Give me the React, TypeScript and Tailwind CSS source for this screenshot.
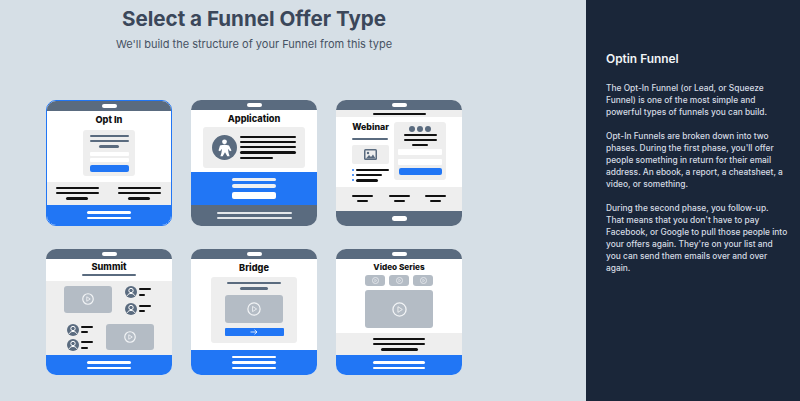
import React from "react";

const Bar = ({ className = "" }: { className?: string }) => <div className={`shrink-0 rounded-full ${className}`} />;

const Play = ({ size, sw = 1.6 }: { size: number; sw?: number }) => (
  <svg width={size} height={size} viewBox="0 0 24 24" fill="none" className="shrink-0">
    <circle cx="12" cy="12" r="10.5" stroke="#f2f4f6" strokeWidth={sw * 1.5} />
    <path d="M9.5 7.5 16.5 12 9.5 16.5Z" stroke="#f2f4f6" strokeWidth={sw} strokeLinejoin="round" />
  </svg>
);

const Person = () => (
  <svg width="12" height="12" viewBox="0 0 24 24" className="shrink-0">
    <circle cx="12" cy="12" r="12" fill="#5a6b7f" />
    <circle cx="12" cy="9" r="4.4" fill="none" stroke="#fff" strokeWidth="2" />
    <path d="M4.5 19.5C6 15.8 9 15 12 15s6 .8 7.5 4.5" fill="none" stroke="#fff" strokeWidth="2" />
  </svg>
);

const PersonRow = () => (
  <div className="flex items-center gap-[2px]">
    <Person />
    <div className="flex flex-col gap-[3.5px]">
      <Bar className="w-[12px] h-[2px] bg-[#111]" />
      <Bar className="w-[6.5px] h-[2px] bg-[#111]" />
    </div>
  </div>
);

const Video = ({ className, play, sw }: { className: string; play: number; sw?: number }) => (
  <div className={`flex items-center justify-center rounded-[3px] bg-[#b4bcc5] ${className}`}>
    <Play size={play} sw={sw} />
  </div>
);

const Head = ({ className = "" }: { className?: string }) => (
  <div className={`shrink-0 flex items-center justify-center bg-[#5a6b7f] ${className}`}>
    <div className="w-[15px] h-[4.5px] rounded-full bg-white" />
  </div>
);

const Title = ({ children, className = "" }: { children: React.ReactNode; className?: string }) => (
  <div className={`font-extrabold text-[#111] leading-[12px] text-center font-['Inter',sans-serif] ${className}`}>{children}</div>
);

const Card = ({ children, className = "" }: { children: React.ReactNode; className?: string }) => (
  <div className={`w-[126px] h-[126px] rounded-[10px] overflow-hidden bg-white flex flex-col ${className}`}>{children}</div>
);

const Foot2 = () => (
  <div className="flex-1 bg-[#2176f5] flex flex-col items-center justify-center gap-[3px]">
    <Bar className="w-[44px] h-[2.2px] bg-white" />
    <Bar className="w-[44px] h-[2.2px] bg-white" />
  </div>
);

const Triple = () => (
  <div className="flex flex-col items-center gap-[3px]">
    <Bar className="w-[43px] h-[2.2px] bg-[#111]" />
    <Bar className="w-[43px] h-[2.2px] bg-[#111]" />
    <Bar className="w-[22px] h-[2.2px] bg-[#111]" />
  </div>
);

const Duo = () => (
  <div className="flex flex-col items-center gap-[3.2px]">
    <Bar className="w-[21px] h-[2px] bg-[#111]" />
    <Bar className="w-[11px] h-[2px] bg-[#111]" />
  </div>
);

const OptIn = () => (
  <Card className="border-[1.5px] border-[#2176f5]">
    <Head className="h-[10px]" />
    <div className="bg-white h-[71px] flex flex-col items-center pt-[3px]">
      <Title className="text-[9.2px]">Opt In</Title>
      <div className="mt-[4px] w-[52px] h-[46px] rounded-[3px] bg-[#eeeeee] flex flex-col items-center pt-[5px]">
        <Bar className="w-[39px] h-[2.2px] bg-[#5a6b7f]" />
        <Bar className="mt-[3px] w-[39px] h-[2.2px] bg-[#5a6b7f]" />
        <Bar className="mt-[3px] w-[20px] h-[2.2px] bg-[#5a6b7f]" />
        <div className="mt-[4px] w-[39px] h-[4px] bg-white rounded-[1px]" />
        <div className="mt-[2px] w-[39px] h-[4px] bg-white rounded-[1px]" />
        <div className="mt-[3.5px] w-[39px] h-[7px] bg-[#2176f5] rounded-[2px]" />
      </div>
    </div>
    <div className="bg-[#eeeeee] h-[23px] flex justify-center gap-[19px] pt-[5px] pr-[2px]">
      <Triple />
      <Triple />
    </div>
    <Foot2 />
  </Card>
);

const Application = () => (
  <Card>
    <Head className="h-[10px]" />
    <div className="h-[62px] flex flex-col items-center pt-[2.5px]">
      <Title className="text-[9.2px]">Application</Title>
      <div className="mt-[2.5px] w-[102px] h-[40.5px] rounded-[3px] bg-[#eeeeee] flex items-center pl-[8.5px] gap-[3.5px]">
        <svg width="25" height="25" viewBox="0 0 25 25" className="shrink-0">
          <circle cx="12.5" cy="12.5" r="12.5" fill="#5a6b7f" />
          <circle cx="12.5" cy="6.8" r="2.4" fill="#fff" />
          <path d="M8 10.5c3-1 6-1 9 0l2.5 5-1.5.8-2-2.6.6 4.3 1 3.2h-2.3l-2.3-4-2.3 4H8.400l1-3.200.6-4.300-2 2.600-1.500-.8Z" fill="#fff" />
        </svg>
        <div className="flex flex-col gap-[3px]">
          <Bar className="w-[56px] h-[2.2px] bg-[#111]" />
          <Bar className="w-[56px] h-[2.2px] bg-[#111]" />
          <Bar className="w-[56px] h-[2.2px] bg-[#111]" />
          <Bar className="w-[56px] h-[2.2px] bg-[#111]" />
          <Bar className="w-[33px] h-[2.2px] bg-[#111]" />
        </div>
      </div>
    </div>
    <div className="h-[33px] bg-[#2176f5] flex flex-col items-center pt-[5.5px]">
      <Bar className="w-[44px] h-[3.5px] bg-[#eef0f3]" />
      <Bar className="mt-[3px] w-[44px] h-[3.5px] bg-[#eef0f3]" />
      <div className="mt-[4.5px] w-[44px] h-[7px] rounded-[2px] bg-white" />
    </div>
    <div className="flex-1 bg-[#5a6b7f] flex flex-col items-center justify-center gap-[3px]">
      <Bar className="w-[75px] h-[2.2px] bg-[#e4e7ea]" />
      <Bar className="w-[75px] h-[2.2px] bg-[#e4e7ea]" />
    </div>
  </Card>
);

const Webinar = () => (
  <Card>
    <Head className="h-[10px]" />
    <div className="h-[7px] bg-[#eeeeee] flex items-center justify-center">
      <Bar className="w-[53px] h-[2px] bg-[#111]" />
    </div>
    <div className="h-[70px] flex justify-center gap-[5px] pt-[5px]">
      <div className="w-[37px] flex flex-col">
        <Title className="text-[8.8px] mt-[-1px] whitespace-nowrap">Webinar</Title>
        <Bar className="mt-[5px] w-[36px] h-[2px] bg-[#5a6b7f]" />
        <div className="mt-[5px] w-[37px] h-[19px] rounded-[2px] bg-[#eeeeee] flex items-center justify-center">
          <svg width="13" height="11" viewBox="0 0 13 11">
            <rect width="13" height="11" rx="1.500" fill="#5a6b7f" />
            <rect x="1.500" y="1.500" width="10" height="8" fill="#eeeeee" />
            <circle cx="4" cy="4" r="1.200" fill="#5a6b7f" />
            <path d="M2 9.500 5 6l2 2 2-2.500 2.500 4Z" fill="#5a6b7f" />
          </svg>
        </div>
        <div className="mt-[5px] flex flex-col gap-[3px]">
          <div className="flex items-center gap-[1.500px]">
            <div className="w-[2px] h-[2px] rounded-full bg-[#2176f5]" />
            <Bar className="w-[33px] h-[2.200px] bg-[#111]" />
          </div>
          <div className="flex items-center gap-[1.500px]">
            <div className="w-[2px] h-[2px] rounded-full bg-[#2176f5]" />
            <Bar className="w-[26px] h-[2.200px] bg-[#111]" />
          </div>
          <div className="flex items-center gap-[1.500px]">
            <div className="w-[2px] h-[2px] rounded-full bg-[#2176f5]" />
            <Bar className="w-[22px] h-[2.200px] bg-[#111]" />
          </div>
        </div>
      </div>
      <div className="w-[52px] h-[57.500px] rounded-[3px] bg-[#eeeeee] flex flex-col items-center pt-[4px]">
        <div className="flex gap-[2.500px]">
          <div className="w-[5.500px] h-[5.500px] rounded-full bg-[#5a6b7f]" />
          <div className="w-[5.500px] h-[5.500px] rounded-full bg-[#5a6b7f]" />
          <div className="w-[5.500px] h-[5.500px] rounded-full bg-[#5a6b7f]" />
        </div>
        <Bar className="mt-[2px] w-[33px] h-[2.200px] bg-[#111]" />
        <Bar className="mt-[3px] w-[33px] h-[2.200px] bg-[#111]" />
        <Bar className="mt-[3px] w-[16px] h-[2.200px] bg-[#111]" />
        <div className="mt-[2.500px] w-[44px] h-[6.500px] bg-white rounded-[1px]" />
        <div className="mt-[3.500px] w-[44px] h-[6.500px] bg-white rounded-[1px]" />
        <div className="mt-[3px] w-[43px] h-[6.500px] bg-[#2176f5] rounded-[2px]" />
      </div>
    </div>
    <div className="h-[24px] bg-[#eeeeee] flex justify-center gap-[15.500px] pt-[8px]">
      <Duo />
      <Duo />
      <Duo />
    </div>
    <Head className="flex-1" />
  </Card>
);

const Summit = () => (
  <Card>
    <Head className="h-[10px]" />
    <div className="h-[22px] flex flex-col items-center pt-[2px]">
      <Title className="text-[9.2px]">Summit</Title>
      <Bar className="mt-[1px] w-[54px] h-[2.200px] bg-[#5a6b7f]" />
    </div>
    <div className="h-[74px] bg-[#eeeeee] flex flex-col pt-[5px]">
      <div className="flex pl-[17.500px] gap-[13px] items-start">
        <Video className="w-[48px] h-[26.500px]" play={12} />
        <div className="flex flex-col gap-[4.500px]">
          <PersonRow />
          <PersonRow />
        </div>
      </div>
      <div className="flex pl-[21px] gap-[13px] items-start mt-[9px]">
        <div className="flex flex-col gap-[3.500px]">
          <PersonRow />
          <PersonRow />
        </div>
        <Video className="w-[48px] h-[26.500px]" play={12} />
      </div>
    </div>
    <Foot2 />
  </Card>
);

const Bridge = () => (
  <Card>
    <Head className="h-[10px]" />
    <div className="h-[91px] flex flex-col items-center pt-[2.500px]">
      <Title className="text-[9.2px]">Bridge</Title>
      <div className="mt-[3px] w-[86px] h-[66px] rounded-[3px] bg-[#eeeeee] flex flex-col items-center pt-[5.500px]">
        <Bar className="w-[54px] h-[2.400px] bg-[#5a6b7f]" />
        <Bar className="mt-[3px] w-[28px] h-[2.400px] bg-[#5a6b7f]" />
        <Video className="mt-[5px] w-[58px] h-[28.500px]" play={14} sw={1.4} />
        <div className="mt-[4.500px] w-[59px] h-[8px] rounded-[1px] bg-[#2176f5] flex items-center justify-center">
          <svg width="8" height="6" viewBox="0 0 8 6" fill="none" stroke="#fff" strokeWidth="0.800">
            <path d="M.5 3h6.500M4.500.8 7 3 4.500 5.200" />
          </svg>
        </div>
      </div>
    </div>
    <div className="flex-1 bg-[#2176f5] flex flex-col items-center justify-center gap-[3.200px]">
      <Bar className="w-[44px] h-[2.200px] bg-white" />
      <Bar className="w-[44px] h-[2.200px] bg-white" />
      <Bar className="w-[44px] h-[2.200px] bg-white" />
    </div>
  </Card>
);

const VideoSeries = () => (
  <Card>
    <Head className="h-[10px]" />
    <div className="h-[74px] flex flex-col items-center pt-[1.500px]">
      <Title className="text-[8.200px] leading-[11px]">Video Series</Title>
      <div className="mt-[2px] flex gap-[3.500px]">
        <Video className="w-[20.500px] h-[11px]" play={7} sw={1.600} />
        <Video className="w-[20.500px] h-[11px]" play={7} sw={1.600} />
        <Video className="w-[20.500px] h-[11px]" play={7} sw={1.600} />
      </div>
      <Video className="mt-[4.500px] w-[68px] h-[38px]" play={15} sw={1.400} />
    </div>
    <div className="h-[22px] bg-[#eeeeee] flex flex-col items-center pt-[5px] gap-[3px]">
      <Bar className="w-[52px] h-[2.200px] bg-[#111]" />
      <Bar className="w-[52px] h-[2.200px] bg-[#111]" />
      <Bar className="w-[37px] h-[2.200px] bg-[#111]" />
    </div>
    <div className="flex-1 bg-[#2176f5] flex flex-col items-center justify-center gap-[3px]">
      <Bar className="w-[52px] h-[2.200px] bg-white" />
      <Bar className="w-[52px] h-[2.200px] bg-white" />
    </div>
  </Card>
);

export default function App() {
  return (
    <div className="w-[800px] h-[401px] flex overflow-hidden font-['Inter',sans-serif]">
      <div className="w-[586px] h-full bg-[#d6dfe6] pl-[46px] flex flex-col">
        <div className="w-[416px] flex flex-col items-center pt-[5px]">
          <h1 className="text-[20.600px] leading-[28px] font-bold text-[#3b475a] whitespace-nowrap">Select a Funnel Offer Type</h1>
          <p className="mt-[3px] text-[11px] leading-[16px] text-[#465263] whitespace-nowrap">We'll build the structure of your Funnel from this type</p>
        </div>
        <div className="mt-[48px] grid grid-cols-[126px_126px_126px] gap-x-[19px] gap-y-[23px]">
          <OptIn />
          <Application />
          <Webinar />
          <Summit />
          <Bridge />
          <VideoSeries />
        </div>
      </div>
      <div className="w-[214px] h-full bg-[#1a2639] pl-[20px] pr-[12px] pt-[50px]">
        <h2 className="text-[11.900px] leading-[18px] font-semibold text-[#f1f4f7]">Optin Funnel</h2>
        <div className="mt-[14px] flex flex-col gap-[12px] text-[8.400px] leading-[12px] font-medium text-[#d6dce4]">
          <p>The Opt-In Funnel (or Lead, or Squeeze Funnel) is one of the most simple and powerful types of funnels you can build.</p>
          <p>Opt-In Funnels are broken down into two phases. During the first phase, you'll offer people something in return for their email address. An ebook, a report, a cheatsheet, a video, or something.</p>
          <p>During the second phase, you follow-up. That means that you don't have to pay Facebook, or Google to pull those people into your offers again. They're on your list and you can send them emails over and over again.</p>
        </div>
      </div>
    </div>
  );
}
